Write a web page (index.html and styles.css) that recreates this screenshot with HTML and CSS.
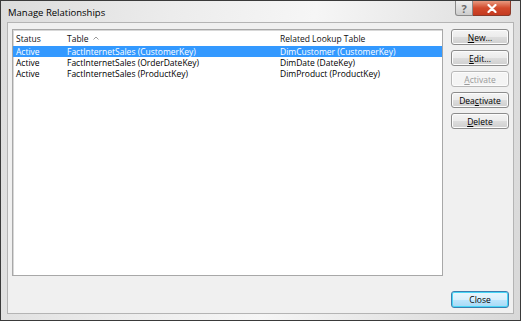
FILE: index.html
```html
<!DOCTYPE html>
<html lang="en">
<head>
    <meta charset="UTF-8">
    <title>Manage Relationships</title>
    <link rel="stylesheet" href="styles.css">
</head>
<body>
    <div class="window">
        <div class="titlebar">
            <span class="title">Manage Relationships</span>
            <div class="caption-btns">
                <span class="cap help">?</span>
                <span class="cap close">
                    <svg width="10" height="9" viewBox="0 0 10 9"><path d="M1.5 1 L8.5 8 M8.5 1 L1.5 8" stroke="#fff" stroke-width="2.2" stroke-linecap="round"/></svg>
                </span>
            </div>
        </div>

        <div class="client">
            <div class="listbox">
                <table>
                    <thead>
                        <tr>
                            <th class="c-status">Status</th>
                            <th class="c-table">Table <svg class="sort" width="6" height="4" viewBox="0 0 6 4"><path d="M0.5 3.5 L3 1 L5.5 3.5" fill="none" stroke="#9a9a9a" stroke-width="1"/></svg></th>
                            <th>Related Lookup Table</th>
                        </tr>
                    </thead>
                    <tbody>
                        <tr class="selected">
                            <td>Active</td>
                            <td>FactInternetSales (CustomerKey)</td>
                            <td>DimCustomer (CustomerKey)</td>
                        </tr>
                        <tr>
                            <td>Active</td>
                            <td>FactInternetSales (OrderDateKey)</td>
                            <td>DimDate (DateKey)</td>
                        </tr>
                        <tr>
                            <td>Active</td>
                            <td>FactInternetSales (ProductKey)</td>
                            <td>DimProduct (ProductKey)</td>
                        </tr>
                    </tbody>
                </table>
            </div>

            <div class="side">
                <button class="btn"><u>N</u>ew...</button>
                <button class="btn"><u>E</u>dit...</button>
                <button class="btn" disabled><u>A</u>ctivate</button>
                <button class="btn">Dea<u>c</u>tivate</button>
                <button class="btn"><u>D</u>elete</button>
            </div>

            <div class="footer">
                <button class="btn default">Close</button>
            </div>
        </div>
    </div>
</body>
</html>
```

FILE: styles.css
```css
body {
    margin: 0;
    font-family: "Open Sans", "Noto Sans", sans-serif;
    background: #fff;
}
.window {
    width: 521px;
    height: 321px;
    box-sizing: border-box;
    border: 1px solid #3a3a3a;
    background: linear-gradient(100deg, #dcdcdc 0%, #ececec 30%, #f6f6f6 55%, #e4e4e4 80%, #d8d8d8 100%);
    display: flex;
    flex-direction: column;
}
.titlebar {
    height: 21px;
    display: flex;
    align-items: flex-start;
    flex-shrink: 0;
}
.title {
    font-size: 9.5px;
    font-weight: 500;
    color: #000;
    margin: 5px 0 0 7px;
}
.caption-btns {
    margin-left: auto;
    margin-right: 9px;
    display: flex;
}
.cap {
    height: 15px;
    display: flex;
    align-items: center;
    justify-content: center;
    border: 1px solid #8a8a8a;
    border-top: none;
    box-sizing: border-box;
}
.help {
    width: 18px;
    border-radius: 0 0 0 3px;
    background: linear-gradient(#eeeeee, #cdcdcd);
    color: #6a6a6a;
    font-size: 11px;
    font-weight: bold;
}
.close {
    width: 38px;
    border-left: none;
    border-color: #8a3a2a;
    border-radius: 0 0 3px 0;
    background: linear-gradient(#e89a80, #d24a2c 50%, #c43a20);
}
.client {
    flex: 1;
    margin: 0 6px 6px 6px;
    border: 1px solid #b4b4b4;
    background: #f0f0f0;
    padding: 6px 4px 5px 4px;
    display: grid;
    grid-template-columns: 1fr 58px;
    grid-template-rows: 1fr auto;
    column-gap: 8px;
    row-gap: 10px;
}
.listbox {
    background: #fff;
    border: 1px solid #a8a8a8;
    box-shadow: inset 1px 1px 0 #d8d8d8;
}
table {
    width: 100%;
    border-collapse: collapse;
    font-size: 8.5px;
    font-weight: 500;
    color: #000;
}
th {
    font-weight: 500;
    text-align: left;
    height: 16px;
    padding: 0 0 0 3px;
    color: #111;
}
.c-status {
    width: 48px;
}
.c-table {
    width: 210px;
}
.sort {
    margin-left: 2px;
    vertical-align: 2px;
}
td {
    height: 11px;
    padding: 0 0 0 3px;
    line-height: 11px;
    white-space: nowrap;
}
tr.selected td {
    background: #3399ff;
    color: #fff;
}
.side {
    display: flex;
    flex-direction: column;
    gap: 5px;
}
.btn {
    height: 16px;
    width: 58px;
    padding: 0;
    font-family: inherit;
    font-size: 8.5px;
    font-weight: 500;
    color: #000;
    border: 1px solid #8c8c8c;
    border-radius: 3px;
    background: linear-gradient(#f4f4f4 0%, #ebebeb 50%, #dddddd 51%, #cfcfcf 100%);
    box-shadow: inset 0 0 0 1px #fcfcfc;
}
.btn:disabled {
    color: #9a9a9a;
    border-color: #b8b8b8;
    background: #f4f4f4;
}
.footer {
    grid-column: 2;
}
.btn.default {
    height: 17px;
    border-color: #3c7fb1;
    box-shadow: inset 0 0 0 1px #48d6f6;
    background: linear-gradient(#eaf6fd 0%, #d9f0fc 50%, #bee6fd 51%, #a7d9f5 100%);
}
```
